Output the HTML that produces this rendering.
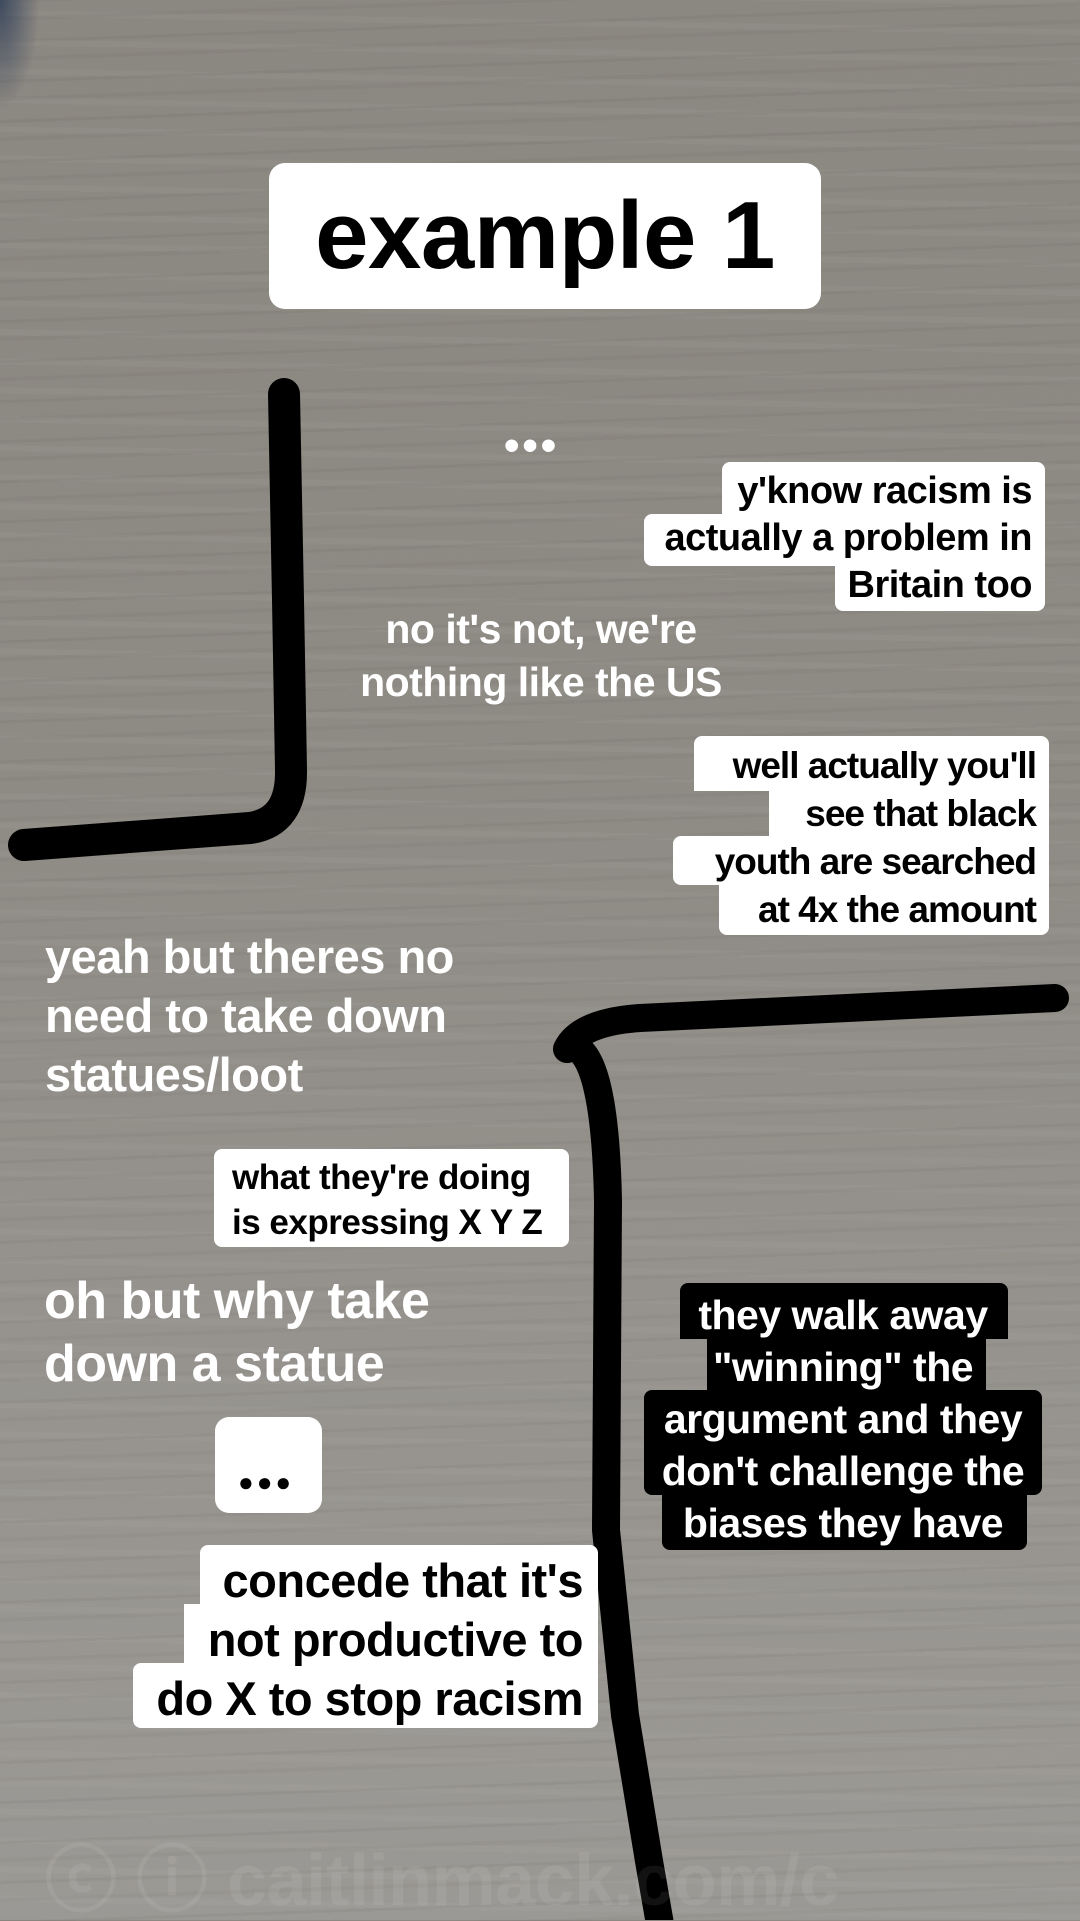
<!DOCTYPE html>
<html><head><meta charset="utf-8">
<style>
*{margin:0;padding:0;box-sizing:border-box}
body{width:1080px;height:1920px;overflow:hidden;position:relative;
font-family:"Liberation Sans",sans-serif;font-weight:bold;letter-spacing:-0.5px;
background:
repeating-linear-gradient(178deg,rgba(60,55,50,0.06) 0 3px,rgba(255,255,255,0) 3px 17px,rgba(70,65,60,0.05) 17px 21px,rgba(255,255,255,0) 21px 40px),
repeating-linear-gradient(181deg,rgba(255,255,255,0.03) 0 6px,rgba(0,0,0,0) 6px 29px),
linear-gradient(180deg,#8b8781 0%,#8e8a84 40%,#96938e 70%,#9b9995 100%);}
.l{position:absolute;white-space:nowrap;line-height:1}
.wb{background:#fff;color:#000;}
.bb{background:#000;color:#fff;}
.wt{color:#fff;}
</style></head><body>
<div style="position:absolute;left:0;top:0;width:40px;height:110px;background:radial-gradient(ellipse at 0 0,#3d4a5e 0,rgba(61,74,94,0) 70%)"></div>

<svg width="1080" height="1920" style="position:absolute;left:0;top:0">
<path d="M284 394 L288 600 L291 770 Q292 822 250 828 L24 845" fill="none" stroke="#000" stroke-width="32" stroke-linecap="round" stroke-linejoin="round"/>
<path d="M567 1049 Q580 1022 640 1018 L1055 998" fill="none" stroke="#000" stroke-width="28" stroke-linecap="round"/>
<path d="M575 1047 Q605 1060 608 1200 L606 1530 L625 1715 L649 1861 L661 1930" fill="none" stroke="#000" stroke-width="28" stroke-linecap="round"/>
</svg>

<div style="position:absolute;left:269px;top:163px;width:552px;height:146px;background:#fff;border-radius:16px;font-size:96px;text-align:center;line-height:146px;color:#000">example 1</div>

<div class="l wt" style="left:504px;top:424px;font-size:44px;letter-spacing:3px">•••</div>

<!-- box 1 -->
<div class="l wb" style="right:35px;top:462px;height:53px;width:323px;border-radius:8px 8px 0 0"></div>
<div class="l wb" style="right:35px;top:514px;height:52px;width:401px;border-radius:8px 0 0 8px"></div>
<div class="l wb" style="right:35px;top:565px;height:46px;width:210px;border-radius:0 0 8px 8px"></div>
<div class="l" style="right:48px;top:468px;font-size:38px;text-align:right;line-height:47px">y'know racism is<br>actually a problem in<br>Britain too</div>

<div class="l wt" style="left:341px;top:603px;width:400px;font-size:41px;text-align:center;line-height:53px;white-space:normal">no it's not, we're<br>nothing like the US</div>

<!-- box 2 -->
<div class="l wb" style="right:31px;top:736px;height:55px;width:355px;border-radius:8px 8px 0 0"></div>
<div class="l wb" style="right:31px;top:790px;height:47px;width:280px"></div>
<div class="l wb" style="right:31px;top:836px;height:49px;width:376px;border-radius:8px 0 0 8px"></div>
<div class="l wb" style="right:31px;top:884px;height:51px;width:330px;border-radius:0 0 8px 8px"></div>
<div class="l" style="right:44px;top:742px;font-size:37px;text-align:right;line-height:48px;letter-spacing:-1px">well actually you'll<br>see that black<br>youth are searched<br>at 4x the amount</div>

<div class="l wt" style="left:45px;top:927px;font-size:47px;line-height:59px">yeah but theres no<br>need to take down<br>statues/loot</div>

<div class="l wb" style="left:214px;top:1149px;width:355px;height:98px;border-radius:8px"></div>
<div class="l" style="left:232px;top:1155px;font-size:35px;line-height:45px">what they're doing<br>is expressing X Y Z</div>

<div class="l wt" style="left:44px;top:1270px;font-size:52px;line-height:63px">oh but why take<br>down a statue</div>

<div class="l wb" style="left:215px;top:1417px;width:107px;height:96px;border-radius:14px"></div>
<div class="l" style="left:238px;top:1469px;font-size:26px;letter-spacing:3px">●●●</div>

<!-- concede -->
<div class="l wb" style="right:482px;top:1545px;height:60px;width:398px;border-radius:8px 8px 0 0"></div>
<div class="l wb" style="right:482px;top:1604px;height:60px;width:414px"></div>
<div class="l wb" style="right:482px;top:1663px;height:65px;width:465px;border-radius:8px 0 8px 8px"></div>
<div class="l" style="right:497px;top:1551px;font-size:47px;text-align:right;line-height:59px">concede that it's<br>not productive to<br>do X to stop racism</div>

<!-- black box -->
<div class="l bb" style="left:680px;top:1283px;height:56px;width:328px;border-radius:8px 8px 0 0"></div>
<div class="l bb" style="left:707px;top:1338px;height:53px;width:279px"></div>
<div class="l bb" style="left:644px;top:1390px;height:52px;width:398px;border-radius:8px 8px 0 0"></div>
<div class="l bb" style="left:644px;top:1441px;height:54px;width:398px;border-radius:0 0 8px 8px"></div>
<div class="l bb" style="left:662px;top:1494px;height:56px;width:365px;border-radius:0 0 8px 8px"></div>
<div class="l" style="left:643px;top:1289px;width:400px;color:#fff;font-size:41px;text-align:center;line-height:52px">they walk away<br>"winning" the<br>argument and they<br>don't challenge the<br>biases they have</div>

<div class="l" style="left:45px;top:1845px;font-size:72px;color:rgba(255,255,255,0.07)">ⓒ ⓘ caitlinmack.com/c</div>
</body></html>
